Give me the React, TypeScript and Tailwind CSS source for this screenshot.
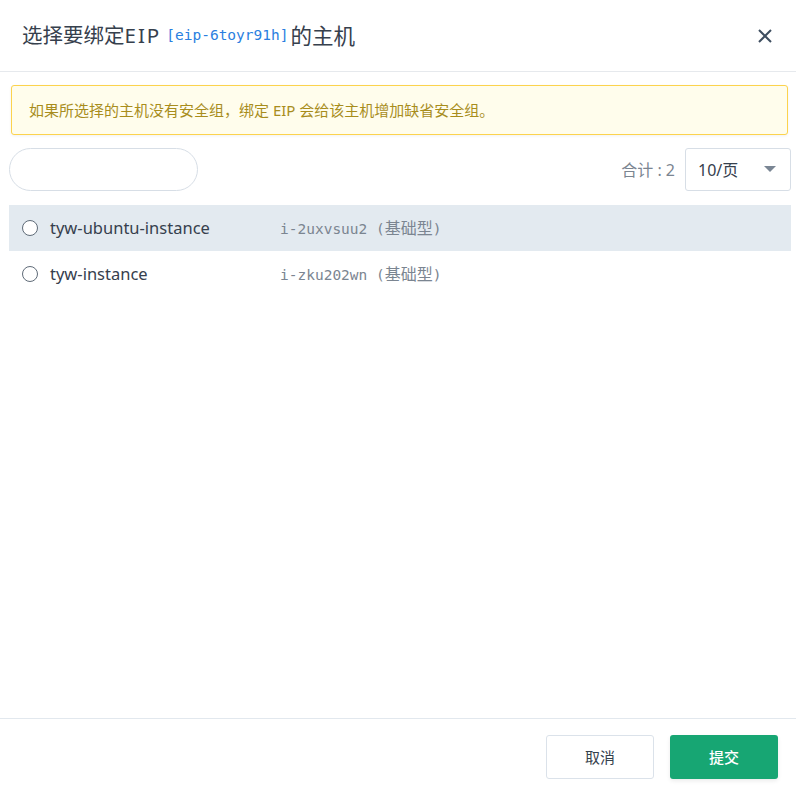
import React, { useState } from 'react';

interface Instance {
  id: string;
  name: string;
  type: string;
}

const instances: Instance[] = [
  { id: 'i-2uxvsuu2', name: 'tyw-ubuntu-instance', type: '基础型' },
  { id: 'i-zku202wn', name: 'tyw-instance', type: '基础型' },
];

const sans = "font-['Noto_Sans','Noto_Sans_CJK_SC',sans-serif]";
const mono = "font-['DejaVu_Sans_Mono','Noto_Sans_CJK_SC',monospace]";

const App: React.FC = () => {
  const [selected, setSelected] = useState<string>('');

  return (
    <div className={`w-[796px] h-[786px] bg-white flex flex-col ${sans}`}>
      {/* Header */}
      <div className="h-[72px] shrink-0 flex items-center justify-between pl-[22px] pr-[21px] border-b border-[#e6e9ed]">
        <h2 className="text-[20.5px] text-[#36404d] leading-none flex items-center">
          <span>选择要绑定</span>
          <span className="tracking-[2px]">EIP</span>
          <span className={`${mono} text-[14.5px] text-[#2a7ee0] ml-[5px] mr-[2px]`}>[eip-6toyr91h]</span>
          <span className="text-[21.5px]">的主机</span>
        </h2>
        <button className="w-[20px] h-[20px] flex items-center justify-center text-[#3e4e60]">
          <svg width="16" height="16" viewBox="0 0 16 16" fill="none" stroke="currentColor" strokeWidth="2">
            <path d="M2 2 L14 14 M14 2 L2 14" />
          </svg>
        </button>
      </div>

      {/* Body */}
      <div className="flex-1 pl-[9px] pr-[5px] pt-[13px]">
        <div className="ml-[2px] mr-[3px] h-[50px] flex items-center px-[17px] bg-[#fffdec] border border-[#fcd34d] rounded-[3px] text-[15px] text-[#a88d1c] shadow-[0_1px_3px_rgba(0,0,0,0.06)]">
          如果所选择的主机没有安全组，绑定 EIP 会给该主机增加缺省安全组。
        </div>

        <div className="mt-[13px] flex items-center justify-between">
          <input
            className="w-[189px] h-[43px] rounded-full border border-[#d7dee6] px-4 outline-none text-[14px]"
          />
          <div className="flex items-center">
            <span className="text-[16px] text-[#7b8591] mr-[10px]">合计 : 2</span>
            <div className="w-[106px] h-[43px] border border-[#d7dee6] rounded-[3px] flex items-center justify-between pl-[12px] pr-[14px] text-[16px] text-[#36404d]">
              <span>10/页</span>
              <svg width="12" height="7" viewBox="0 0 12 7">
                <path d="M0 0 L12 0 L6 6 Z" fill="#7a8694" />
              </svg>
            </div>
          </div>
        </div>

        <div className="mt-[14px]">
          {instances.map((inst, i) => (
            <div
              key={inst.id}
              onClick={() => setSelected(inst.id)}
              className={`h-[46px] flex items-center pl-[13px] cursor-pointer ${i === 0 ? 'bg-[#e3eaf0]' : 'bg-white'}`}
            >
              <span className="w-[16px] h-[16px] rounded-full border border-[#5f6b78] bg-white flex items-center justify-center">
                {selected === inst.id && <span className="w-[8px] h-[8px] rounded-full bg-[#17a673]" />}
              </span>
              <span className="ml-[12px] w-[230px] text-[16.5px] text-[#36404d] pt-[1px]">{inst.name}</span>
              <span className={`${mono} text-[14.5px] text-[#7b8591] pt-[1px]`}>
                {inst.id} (<span className="text-[16px]">{inst.type}</span>)
              </span>
            </div>
          ))}
        </div>
      </div>

      {/* Footer */}
      <div className="h-[68px] shrink-0 border-t border-[#e2e8ee] flex items-start justify-end gap-[16px] pt-[16px] pr-[18px]">
        <button className="w-[108px] h-[44px] rounded-[3px] border border-[#dbe2ea] bg-white text-[15px] text-[#36404d]">
          取消
        </button>
        <button className="w-[108px] h-[44px] rounded-[3px] bg-[#17a673] text-white text-[15px] font-medium shadow-[0_2px_4px_rgba(0,0,0,0.08)]">
          提交
        </button>
      </div>
    </div>
  );
};

export default App;
